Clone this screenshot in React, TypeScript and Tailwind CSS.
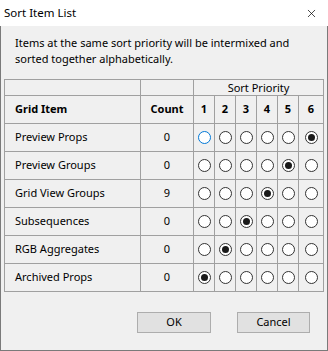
import { X } from 'lucide-react';

const items = [
  { name: 'Preview Props', count: 0, pick: 6 },
  { name: 'Preview Groups', count: 0, pick: 5 },
  { name: 'Grid View Groups', count: 9, pick: 4 },
  { name: 'Subsequences', count: 0, pick: 3 },
  { name: 'RGB Aggregates', count: 0, pick: 2 },
  { name: 'Archived Props', count: 0, pick: 1 },
];

const priorities = [1, 2, 3, 4, 5, 6];

function Radio({ checked, focus }: { checked: boolean; focus?: boolean }) {
  return (
    <span
      className={`flex h-[13px] w-[13px] items-center justify-center rounded-full border bg-white ${
        focus ? 'border-[#0078d7]' : 'border-[#333333]'
      }`}
    >
      {checked && <span className="h-[7px] w-[7px] rounded-full bg-[#1a1a1a]" />}
    </span>
  );
}

export default function App() {
  return (
    <div className="flex h-[351px] w-[328px] flex-col bg-[#f0f0f0] font-['Segoe_UI','Noto_Sans',sans-serif] text-[11px] text-black">
      {/* Titelleiste */}
      <div className="flex h-[26px] items-center justify-between bg-white pl-[4px] pr-[10px] text-[11.5px]">
        <span>Sort Item List</span>
        <X className="h-[13px] w-[13px]" strokeWidth={1.3} />
      </div>

      <div className="flex flex-1 flex-col border-x border-b border-[#7a7a7a]">
        <p className="pl-[14px] pr-2 pt-[9px] leading-[16px]">
          Items at the same sort priority will be intermixed and sorted together alphabetically.
        </p>

        <div className="ml-[3px] mt-[12px] grid w-[320px] grid-cols-[135px_52px_20px_20px_20px_20px_20px_24px] grid-rows-[15px_27px_27px_27px_27px_27px_27px_27px] gap-px border border-[#a0a0a0] bg-[#a0a0a0]">
          <div className="bg-[#f0f0f0]" />
          <div className="bg-[#f0f0f0]" />
          <div className="col-span-6 flex items-center justify-center bg-[#f0f0f0] leading-none">
            Sort Priority
          </div>

          <div className="flex items-center bg-[#f0f0f0] pl-[10px] font-bold">Grid Item</div>
          <div className="flex items-center justify-center bg-[#f0f0f0] font-bold">Count</div>
          {priorities.map((p) => (
            <div key={p} className="flex items-center justify-center bg-[#f0f0f0] font-bold">
              {p}
            </div>
          ))}

          {items.map((it, row) => (
            <>
              <div key={`${it.name}-n`} className="flex items-center bg-[#f0f0f0] pl-[10px]">
                {it.name}
              </div>
              <div key={`${it.name}-c`} className="flex items-center justify-center bg-[#f0f0f0]">
                {it.count}
              </div>
              {priorities.map((p) => (
                <div key={`${it.name}-${p}`} className="flex items-center justify-center bg-[#f0f0f0]">
                  <Radio checked={it.pick === p} focus={row === 0 && p === 1} />
                </div>
              ))}
            </>
          ))}
        </div>

        <div className="mt-[20px] flex pl-[136px]">
          <button className="h-[21px] w-[74px] border border-[#adadad] bg-[#e1e1e1]">OK</button>
          <button className="ml-[26px] h-[21px] w-[73px] border border-[#adadad] bg-[#e1e1e1]">Cancel</button>
        </div>
      </div>
    </div>
  );
}
